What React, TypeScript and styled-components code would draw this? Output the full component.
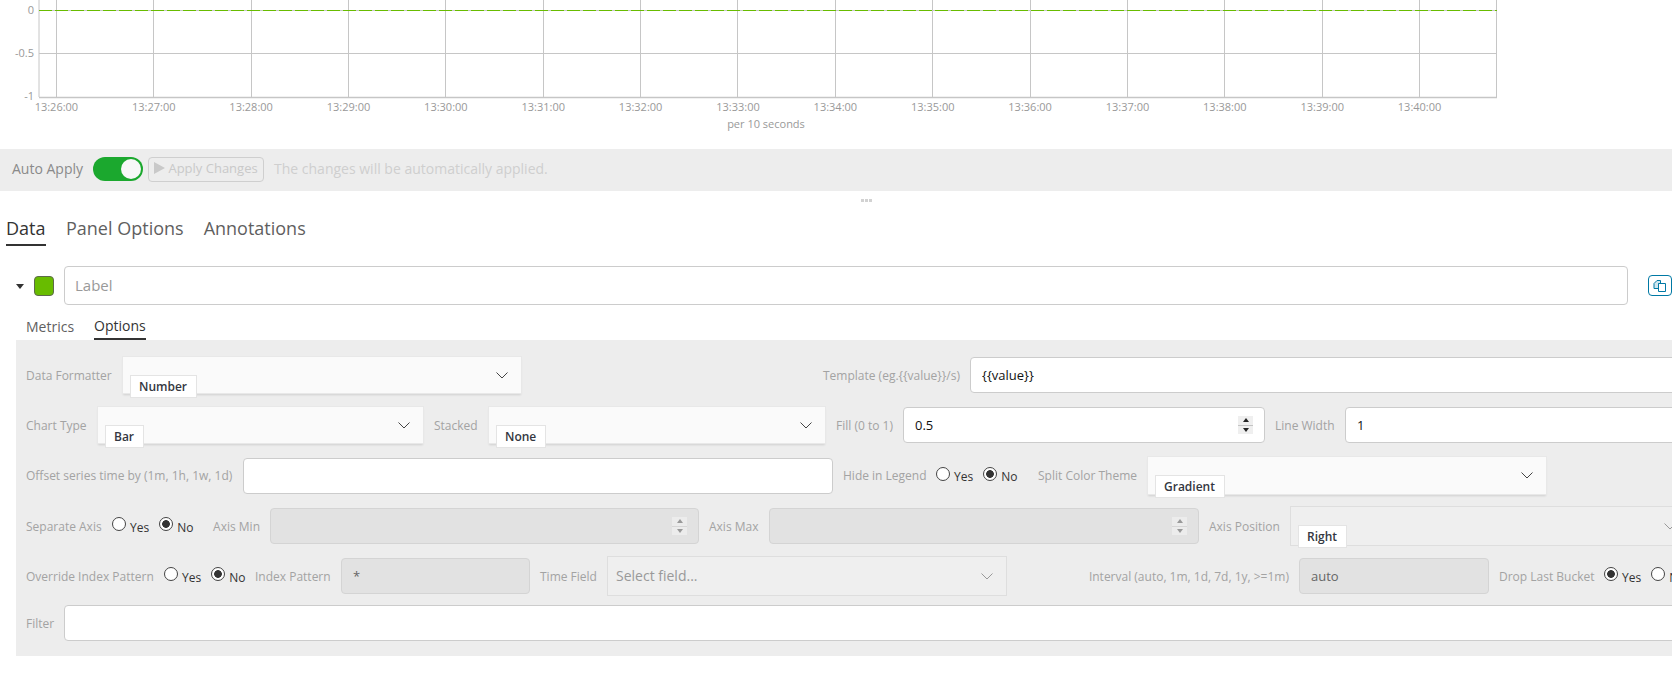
import React from "react";
import styled, { createGlobalStyle } from "styled-components";

const GlobalStyle = createGlobalStyle`
  html, body {
    margin: 0;
    padding: 0;
    background: #fff;
    overflow: hidden;
  }
  body, input {
    font-family: "Open Sans", "Noto Sans", sans-serif;
  }
`;

const Page = styled.div`
  width: 1672px;
  height: 680px;
  overflow: hidden;
`;

const ChartWrap = styled.div`
  height: 149px;
`;

const ChartSvg = styled.svg`
  display: block;
  font-family: "Open Sans", sans-serif;
  font-size: 11px;
  fill: #999;
`;

const Toolbar = styled.div`
  height: 42px;
  box-sizing: border-box;
  display: flex;
  align-items: center;
  padding: 0 0 2px 12px;
  background: #ededed;
`;

const AutoLabel = styled.span`
  font-size: 14px;
  color: #8a8a8a;
  margin-right: 10px;
  padding-bottom: 2px;
`;

const Switch = styled.div`
  width: 50px;
  height: 24px;
  box-sizing: border-box;
  padding: 2px;
  border-radius: 12px;
  background: #1ba82e;
  display: flex;
  justify-content: flex-end;
`;

const Knob = styled.div`
  width: 20px;
  height: 20px;
  border-radius: 50%;
  background: #f7f7f7;
`;

const ApplyButton = styled.div`
  width: 116px;
  height: 25px;
  box-sizing: border-box;
  margin-left: 5px;
  padding-bottom: 2px;
  border: 1px solid #cfcfcf;
  border-radius: 4px;
  display: flex;
  align-items: center;
  justify-content: center;
  gap: 3px;
  font-size: 13px;
  color: #c9c9c9;
`;

const ToolbarHint = styled.span`
  margin-left: 10px;
  padding-bottom: 2px;
  font-size: 14px;
  color: #cfcfcf;
`;

const ResizeHandle = styled.div`
  height: 18px;
  display: flex;
  align-items: center;
  justify-content: center;
  gap: 1px;
  padding-left: 60px;
`;

const ResizeDot = styled.span`
  width: 3px;
  height: 3px;
  background: #d2d2d2;
`;

const Tabs = styled.div`
  height: 37px;
  display: flex;
  gap: 20px;
  padding-left: 6px;
`;

const Tab = styled.div<{ $active?: boolean }>`
  box-sizing: border-box;
  height: 37px;
  padding-top: 6px;
  line-height: 27px;
  font-size: 18px;
  min-width: 40px;
  color: ${(p) => (p.$active ? "#333" : "#5f5f5f")};
  border-bottom: 2px solid ${(p) => (p.$active ? "#333" : "transparent")};
`;

const SeriesRow = styled.div`
  margin-top: 20px;
  height: 39px;
  display: flex;
  align-items: center;
  padding-left: 16px;
`;

const Caret = styled.span`
  width: 0;
  height: 0;
  margin-top: 1px;
  border-left: 4px solid transparent;
  border-right: 4px solid transparent;
  border-top: 5px solid #333;
`;

const Swatch = styled.span`
  width: 20px;
  height: 20px;
  box-sizing: border-box;
  margin-left: 10px;
  margin-right: 10px;
  border-radius: 4px;
  border: 1px solid #5d6b4a;
  background: #68bc00;
`;

const LabelInput = styled.input`
  width: 1564px;
  height: 39px;
  box-sizing: border-box;
  padding: 0 10px 2px;
  border: 1px solid #ccc;
  border-radius: 4px;
  font-size: 15px;
  background: #fff;
  outline: none;
  &::placeholder {
    color: #999;
    opacity: 1;
  }
`;

const CloneButton = styled.div`
  width: 24px;
  height: 21px;
  box-sizing: border-box;
  margin-left: 20px;
  border: 1px solid #0079a5;
  border-radius: 4px;
  display: flex;
  align-items: center;
  justify-content: center;
  flex-shrink: 0;
`;

const SubTabs = styled.div`
  height: 35px;
  display: flex;
  align-items: flex-end;
  gap: 20px;
  padding-left: 26px;
`;

const SubTab = styled.div<{ $active?: boolean }>`
  box-sizing: border-box;
  height: 26px;
  line-height: ${(p) => (p.$active ? 24 : 26)}px;
  font-size: 14px;
  color: ${(p) => (p.$active ? "#333" : "#5f5f5f")};
  border-bottom: 2px solid ${(p) => (p.$active ? "#333" : "transparent")};
`;

const OptionsPanel = styled.div`
  margin-left: 16px;
  width: 2000px;
  height: 316px;
  box-sizing: border-box;
  padding: 16px 0 0 11px;
  background: #ededed;
  display: flex;
  flex-direction: column;
  gap: 12px;
`;

const Row = styled.div<{ $cols: string }>`
  height: 38px;
  display: grid;
  grid-template-columns: ${(p) => p.$cols};
  column-gap: 10px;
  align-items: center;
`;

const FilterRow = styled(Row)`
  height: 36px;
  margin-top: -1px;
`;

const FieldLabel = styled.label<{ $end?: boolean }>`
  font-size: 12px;
  white-space: nowrap;
  color: #a3a3a3;
  text-align: ${(p) => (p.$end ? "right" : "left")};
  &:first-child {
    margin-left: -1px;
  }
`;

const TextField = styled.input<{ $disabled?: boolean }>`
  width: 100%;
  height: 36px;
  box-sizing: border-box;
  padding: 0 11px;
  border: 1px solid ${(p) => (p.$disabled ? "#d4d4d4" : "#ccc")};
  border-radius: 4px;
  background: ${(p) => (p.$disabled ? "#e2e2e2" : "#fff")};
  color: ${(p) => (p.$disabled ? "#666" : "#111")};
  font-size: 13px;
  outline: none;
`;

const NumberBox = styled.div<{ $disabled?: boolean }>`
  height: 36px;
  box-sizing: border-box;
  padding: 0 11px;
  display: flex;
  align-items: center;
  justify-content: space-between;
  border: 1px solid ${(p) => (p.$disabled ? "#d4d4d4" : "#ccc")};
  border-radius: 4px;
  background: ${(p) => (p.$disabled ? "#e2e2e2" : "#fff")};
  color: #111;
  font-size: 13px;
`;

const Spinner = styled.div<{ $disabled?: boolean }>`
  width: 15px;
  height: 18px;
  display: flex;
  flex-direction: column;
  gap: 1px;
  background: ${(p) => (p.$disabled ? "#d6d6d6" : "#c4c4c4")};
`;

const SpinnerPart = styled.span<{ $disabled?: boolean }>`
  flex: 1;
  display: flex;
  align-items: center;
  justify-content: center;
  background: ${(p) => (p.$disabled ? "#ececec" : "#efefef")};
`;

const SpinArrow = styled.span<{ $up?: boolean; $disabled?: boolean }>`
  width: 0;
  height: 0;
  border-left: 3.5px solid transparent;
  border-right: 3.5px solid transparent;
  ${(p) => (p.$up ? "border-bottom" : "border-top")}: 4px solid
    ${(p) => (p.$disabled ? "#999" : "#222")};
`;

const SelectBox = styled.div<{ $h?: number; $muted?: boolean }>`
  position: relative;
  height: ${(p) => p.$h ?? 38}px;
  box-sizing: border-box;
  padding: 0 13px 0 8px;
  display: flex;
  align-items: center;
  justify-content: space-between;
  border: 1px solid ${(p) => (p.$muted ? "#dedede" : "#e8e8e8")};
  background: ${(p) => (p.$muted ? "#efefef" : "#fafafa")};
  box-shadow: ${(p) => (p.$muted ? "none" : "0 2px 2px -1px rgba(0, 0, 0, 0.12)")};
`;

const SelectChip = styled.span`
  position: absolute;
  left: 7px;
  top: 18px;
  height: 23px;
  box-sizing: border-box;
  padding: 0 9px 0 8px;
  display: flex;
  align-items: center;
  background: #fff;
  border: 1px solid #e4e4e4;
  font-size: 12px;
  font-weight: 600;
  color: #343741;
`;

const SelectPlaceholder = styled.span`
  font-size: 14px;
  padding-bottom: 2px;
  color: #999;
`;

const RadioGroup = styled.div`
  display: flex;
  align-items: center;
`;

const RadioOption = styled.label`
  display: flex;
  align-items: center;
  gap: 4px;
  padding-top: 2px;
  font-size: 12px;
  color: #333;
  margin-right: 10px;
`;

const RadioCircle = styled.input.attrs({ type: "radio" })`
  appearance: none;
  width: 14px;
  height: 14px;
  margin: -6px 0 0 0;
  box-sizing: border-box;
  border: 1px solid #444;
  border-radius: 50%;
  background: #fff;
  &:checked {
    background: radial-gradient(circle, #333 0 3.5px, #fff 4.2px);
  }
`;

const GRID_X = Array.from({ length: 15 }, (_, i) => 56.4 + i * 97.37);
const TIME_LABELS = GRID_X.map((x, i) => ({ x, text: `13:${26 + i}:00` }));

const Chart = () => (
  <ChartSvg width={1672} height={149}>
    {GRID_X.map((x) => (
      <line key={x} x1={Math.floor(x) + 0.5} x2={Math.floor(x) + 0.5} y1={0} y2={97} stroke="#c6c6c6" />
    ))}
    <line x1={1496.5} x2={1496.5} y1={0} y2={97} stroke="#c6c6c6" />
    <line x1={39} x2={39} y1={0} y2={97} stroke="#c6c6c6" />
    <line x1={39} x2={1497} y1={53.5} y2={53.5} stroke="#c6c6c6" />
    <line x1={39} x2={1497} y1={97.5} y2={97.5} stroke="#c6c6c6" strokeWidth={1.5} />
    <line x1={39} x2={1497} y1={10.5} y2={10.5} stroke="#c6c6c6" />
    <line x1={39} x2={1497} y1={10.5} y2={10.5} stroke="#68bc00" strokeDasharray="13 3" />
    <text x={34} y={14} textAnchor="end">0</text>
    <text x={34} y={57} textAnchor="end">-0.5</text>
    <text x={34} y={100} textAnchor="end">-1</text>
    {TIME_LABELS.map((t) => (
      <text key={t.text} x={t.x} y={111} textAnchor="middle">{t.text}</text>
    ))}
    <text x={766} y={128} textAnchor="middle">per 10 seconds</text>
  </ChartSvg>
);

const Chevron = ({ color = "#444" }: { color?: string }) => (
  <svg width={12} height={7} viewBox="0 0 12 7">
    <polyline points="0.5,0.5 6,6 11.5,0.5" fill="none" stroke={color} strokeWidth={1} />
  </svg>
);

const CloneIcon = () => (
  <svg width={14} height={14} viewBox="0 0 14 14" fill="none" stroke="#0079a5" strokeWidth={1}>
    <path d="M1 9.5V4.5L4 1.5H7.5V4.5H5.5V9.5Z" fill="#cfe6ef" />
    <path d="M5.5 4.5H12.5V12.5H5.5Z" fill="#fff" />
  </svg>
);

const Select = ({ value, h, muted }: { value: string; h?: number; muted?: boolean }) => (
  <SelectBox $h={h} $muted={muted}>
    <span />
    <Chevron color={muted ? "#999" : "#444"} />
    <SelectChip>{value}</SelectChip>
  </SelectBox>
);

const NumberField = ({ value, disabled }: { value?: string; disabled?: boolean }) => (
  <NumberBox $disabled={disabled}>
    <span>{value}</span>
    <Spinner $disabled={disabled}>
      <SpinnerPart $disabled={disabled}><SpinArrow $up $disabled={disabled} /></SpinnerPart>
      <SpinnerPart $disabled={disabled}><SpinArrow $disabled={disabled} /></SpinnerPart>
    </Spinner>
  </NumberBox>
);

const YesNo = ({ name, yes }: { name: string; yes?: boolean }) => (
  <RadioGroup>
    <RadioOption>
      <RadioCircle name={name} defaultChecked={yes} />
      Yes
    </RadioOption>
    <RadioOption>
      <RadioCircle name={name} defaultChecked={!yes} />
      No
    </RadioOption>
  </RadioGroup>
);

const App = () => {
  return (
    <Page>
      <GlobalStyle />
      <ChartWrap>
        <Chart />
      </ChartWrap>

      <Toolbar>
        <AutoLabel>Auto Apply</AutoLabel>
        <Switch>
          <Knob />
        </Switch>
        <ApplyButton>
          <svg width={11} height={12} viewBox="0 0 11 12">
            <polygon points="0,0 11,6 0,12" fill="#c9c9c9" />
          </svg>
          Apply Changes
        </ApplyButton>
        <ToolbarHint>The changes will be automatically applied.</ToolbarHint>
      </Toolbar>

      <ResizeHandle>
        <ResizeDot />
        <ResizeDot />
        <ResizeDot />
      </ResizeHandle>

      <Tabs>
        <Tab $active>Data</Tab>
        <Tab>Panel Options</Tab>
        <Tab>Annotations</Tab>
      </Tabs>

      <SeriesRow>
        <Caret />
        <Swatch />
        <LabelInput placeholder="Label" readOnly />
        <CloneButton>
          <CloneIcon />
        </CloneButton>
      </SeriesRow>

      <SubTabs>
        <SubTab>Metrics</SubTab>
        <SubTab $active>Options</SubTab>
      </SubTabs>

      <OptionsPanel>
        <Row $cols="85px 400px 428px 1fr">
          <FieldLabel>Data Formatter</FieldLabel>
          <Select value="Number" />
          <FieldLabel $end>{"Template (eg.{{value}}/s)"}</FieldLabel>
          <TextField defaultValue="{{value}}" readOnly />
        </Row>

        <Row $cols="60px 327px 44px 338px 57px 362px 60px 1fr">
          <FieldLabel>Chart Type</FieldLabel>
          <Select value="Bar" />
          <FieldLabel>Stacked</FieldLabel>
          <Select value="None" />
          <FieldLabel $end>Fill (0 to 1)</FieldLabel>
          <NumberField value="0.5" />
          <FieldLabel>Line Width</FieldLabel>
          <TextField defaultValue="1" readOnly />
        </Row>

        <Row $cols="206px 590px 83px 82px 109px 400px">
          <FieldLabel>Offset series time by (1m, 1h, 1w, 1d)</FieldLabel>
          <TextField readOnly />
          <FieldLabel>Hide in Legend</FieldLabel>
          <YesNo name="hide-legend" />
          <FieldLabel $end>Split Color Theme</FieldLabel>
          <Select value="Gradient" h={39} />
        </Row>

        <Row $cols="75px 81px 57px 429px 50px 430px 71px 400px">
          <FieldLabel>Separate Axis</FieldLabel>
          <YesNo name="separate-axis" />
          <FieldLabel $end>Axis Min</FieldLabel>
          <NumberField disabled />
          <FieldLabel>Axis Max</FieldLabel>
          <NumberField disabled />
          <FieldLabel>Axis Position</FieldLabel>
          <Select value="Right" h={40} muted />
        </Row>

        <Row $cols="127px 81px 76px 189px 57px 400px 272px 190px 95px 1fr">
          <FieldLabel>Override Index Pattern</FieldLabel>
          <YesNo name="override-index" />
          <FieldLabel>Index Pattern</FieldLabel>
          <TextField $disabled defaultValue="*" readOnly />
          <FieldLabel>Time Field</FieldLabel>
          <SelectBox $h={40} $muted>
            <SelectPlaceholder>Select field...</SelectPlaceholder>
            <Chevron color="#999" />
          </SelectBox>
          <FieldLabel $end>{"Interval (auto, 1m, 1d, 7d, 1y, >=1m)"}</FieldLabel>
          <TextField $disabled defaultValue="auto" readOnly />
          <FieldLabel>Drop Last Bucket</FieldLabel>
          <YesNo name="drop-last" yes />
        </Row>

        <FilterRow $cols="27px 1fr">
          <FieldLabel>Filter</FieldLabel>
          <TextField readOnly />
        </FilterRow>
      </OptionsPanel>
    </Page>
  );
};

export default App;
